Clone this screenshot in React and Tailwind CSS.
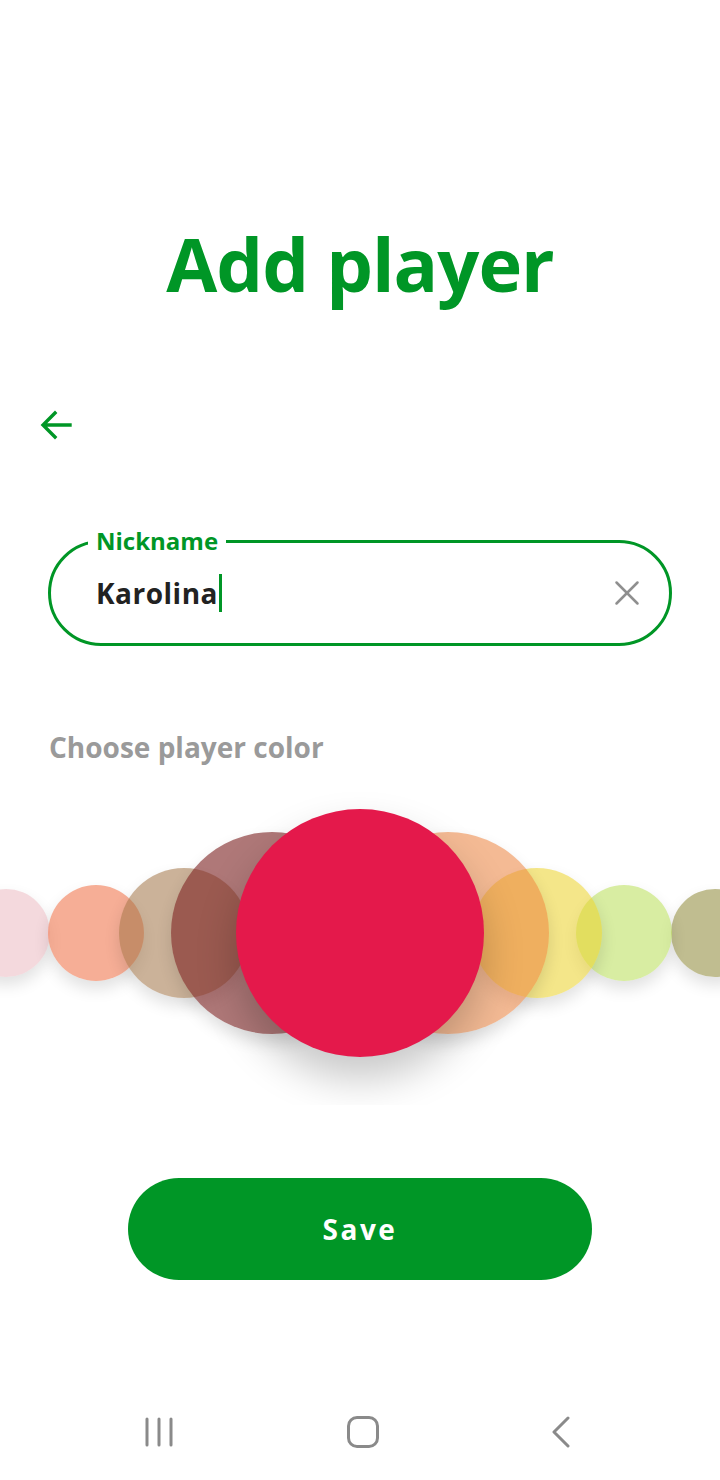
import React from "react";
import { X } from "lucide-react";

const circles = [
  { cx: 6, r: 44, color: "rgba(230,170,180,0.45)", z: 1 },
  { cx: 96, r: 48, color: "rgba(240,120,80,0.6)", z: 2 },
  { cx: 184, r: 65, color: "rgba(160,115,70,0.55)", z: 3 },
  { cx: 272, r: 101, color: "rgba(125,34,34,0.61)", z: 4 },
  { cx: 715, r: 44, color: "rgba(150,145,70,0.6)", z: 1 },
  { cx: 624, r: 48, color: "rgba(190,225,100,0.6)", z: 2 },
  { cx: 537, r: 65, color: "rgba(235,210,40,0.55)", z: 3 },
  { cx: 448, r: 101, color: "rgba(235,130,60,0.55)", z: 4 },
];

const App = () => {
  return (
    <div className="flex h-[1480px] w-[720px] flex-col bg-white font-['Open_Sans',sans-serif]">
      {/* Title */}
      <h1 className="mt-[227px] text-center text-[74px] font-bold leading-[74px] tracking-[-1px] text-[#009626]">
        Add player
      </h1>

      {/* Back */}
      <div className="mt-[108px] pl-[40px]">
        <svg width="32" height="32" viewBox="0 0 32 32" fill="none" stroke="#009626" strokeWidth="3.4" strokeLinecap="square">
          <path d="M30 16H4M15 4L3 16l12 12" />
        </svg>
      </div>

      {/* Nickname field */}
      <div className="relative mx-[48px] mt-[99px] flex h-[106px] items-center rounded-full border-[3px] border-[#009626] pl-[45px] pr-[21px]">
        <span className="absolute left-[37px] top-[-18px] bg-white px-[8px] text-[24px] font-bold leading-[32px] text-[#009626]">
          Nickname
        </span>
        <span className="text-[28px] font-bold leading-none tracking-[0.5px] text-[#222]">Karolina</span>
        <span className="ml-[1px] h-[38px] w-[3px] bg-[#009626]" />
        <X className="ml-auto text-[#8f8f8f]" size={42} strokeWidth={1.45} />
      </div>

      {/* Color label */}
      <p className="mt-[83px] pl-[49px] text-[28px] font-bold leading-[36px] text-[#9a9a9a]">
        Choose player color
      </p>

      {/* Color carousel */}
      <div className="relative h-[340px] w-full overflow-hidden">
        {circles.map((c, i) => (
          <div
            key={i}
            className="absolute rounded-full shadow-[0_8px_16px_rgba(0,0,0,0.12)]"
            style={{
              left: c.cx - c.r,
              top: 168 - c.r,
              width: c.r * 2,
              height: c.r * 2,
              backgroundColor: c.color,
              zIndex: c.z,
            }}
          />
        ))}
        <div className="absolute left-[236px] top-[44px] z-10 h-[248px] w-[248px] rounded-full bg-[#e4194b] shadow-[0_22px_40px_rgba(0,0,0,0.22)]" />
      </div>

      {/* Save */}
      <div className="mt-[73px] flex justify-center">
        <button className="flex h-[102px] w-[464px] items-center justify-center rounded-full bg-[#009626] text-[28px] font-bold tracking-[2.5px] text-white">
          Save
        </button>
      </div>

      {/* Nav bar */}
      <div className="mt-auto flex h-[80px] items-center justify-between pb-[16px] pl-[145px] pr-[149px]">
        <svg width="30" height="32" viewBox="0 0 30 32" fill="none" stroke="#8a8a8a" strokeWidth="3" strokeLinecap="round">
          <path d="M2 3v26M14 3v26M26 3v26" />
        </svg>
        <div className="h-[32px] w-[32px] rounded-[10px] border-[3px] border-[#8a8a8a]" />
        <svg width="20" height="32" viewBox="0 0 20 32" fill="none" stroke="#8a8a8a" strokeWidth="3" strokeLinecap="round" strokeLinejoin="round">
          <path d="M17 2L3 16l14 14" />
        </svg>
      </div>
    </div>
  );
};

export default App;
